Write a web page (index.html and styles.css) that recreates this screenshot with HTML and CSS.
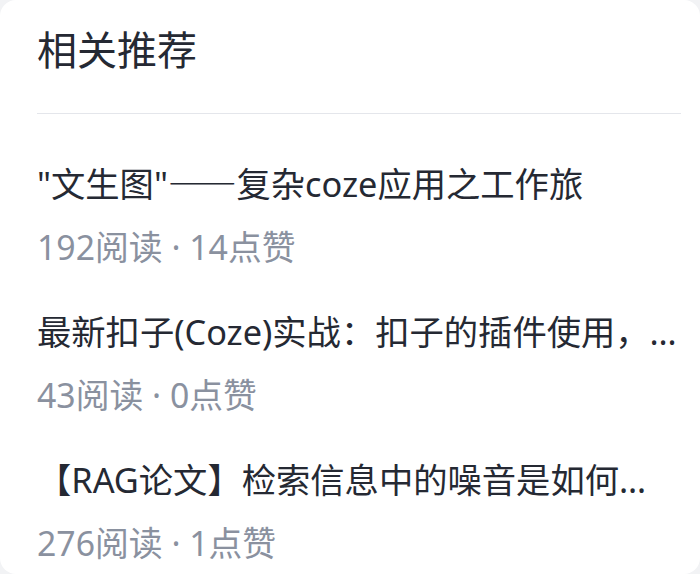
FILE: index.html
```html
<!DOCTYPE html>
<html lang="zh-CN">
<head>
<meta charset="utf-8">
<title>相关推荐</title>
<link rel="stylesheet" href="styles.css">
</head>
<body>
<section class="card">
  <h2 class="card-title">相关推荐</h2>
  <ul class="list">
    <li class="item">
      <a class="item-title" href="#">"文生图"<span class="dash">——</span>复杂coze应用之工作旅</a>
      <div class="item-meta">192阅读 · 14点赞</div>
    </li>
    <li class="item">
      <a class="item-title" href="#">最新扣子(Coze)实战：扣子的插件使用，…</a>
      <div class="item-meta">43阅读 · 0点赞</div>
    </li>
    <li class="item">
      <a class="item-title" href="#">【RAG论文】检索信息中的噪音是如何…</a>
      <div class="item-meta">276阅读 · 1点赞</div>
    </li>
  </ul>
</section>
</body>
</html>
```

FILE: styles.css
```css
html, body {
  margin: 0;
  padding: 0;
}
body {
  background: #f2f3f5;
  font-family: "Noto Sans", "Noto Sans CJK SC", sans-serif;
}
.card {
  box-sizing: border-box;
  width: 700px;
  height: 574px;
  background: #ffffff;
  border-radius: 16px;
  padding: 0 19px 0 37px;
  overflow: hidden;
}
.card-title {
  margin: 0;
  padding: 22px 0 35px;
  font-size: 40px;
  line-height: 56px;
  font-weight: 400;
  color: #252933;
  border-bottom: 1px solid #e4e6eb;
}
.list {
  list-style: none;
  margin: 0;
  padding: 44px 0 0;
  display: flex;
  flex-direction: column;
  gap: 39px;
}
.item {
  display: flex;
  flex-direction: column;
  gap: 17px;
}
.item-title {
  display: block;
  font-size: 34.3px;
  line-height: 48px;
  color: #252933;
  text-decoration: none;
  white-space: nowrap;
  overflow: hidden;
}
.dash {
  font-family: "Noto Sans CJK SC", sans-serif;
}
.item-meta {
  font-size: 33.8px;
  line-height: 44px;
  color: #8a919f;
}
```
